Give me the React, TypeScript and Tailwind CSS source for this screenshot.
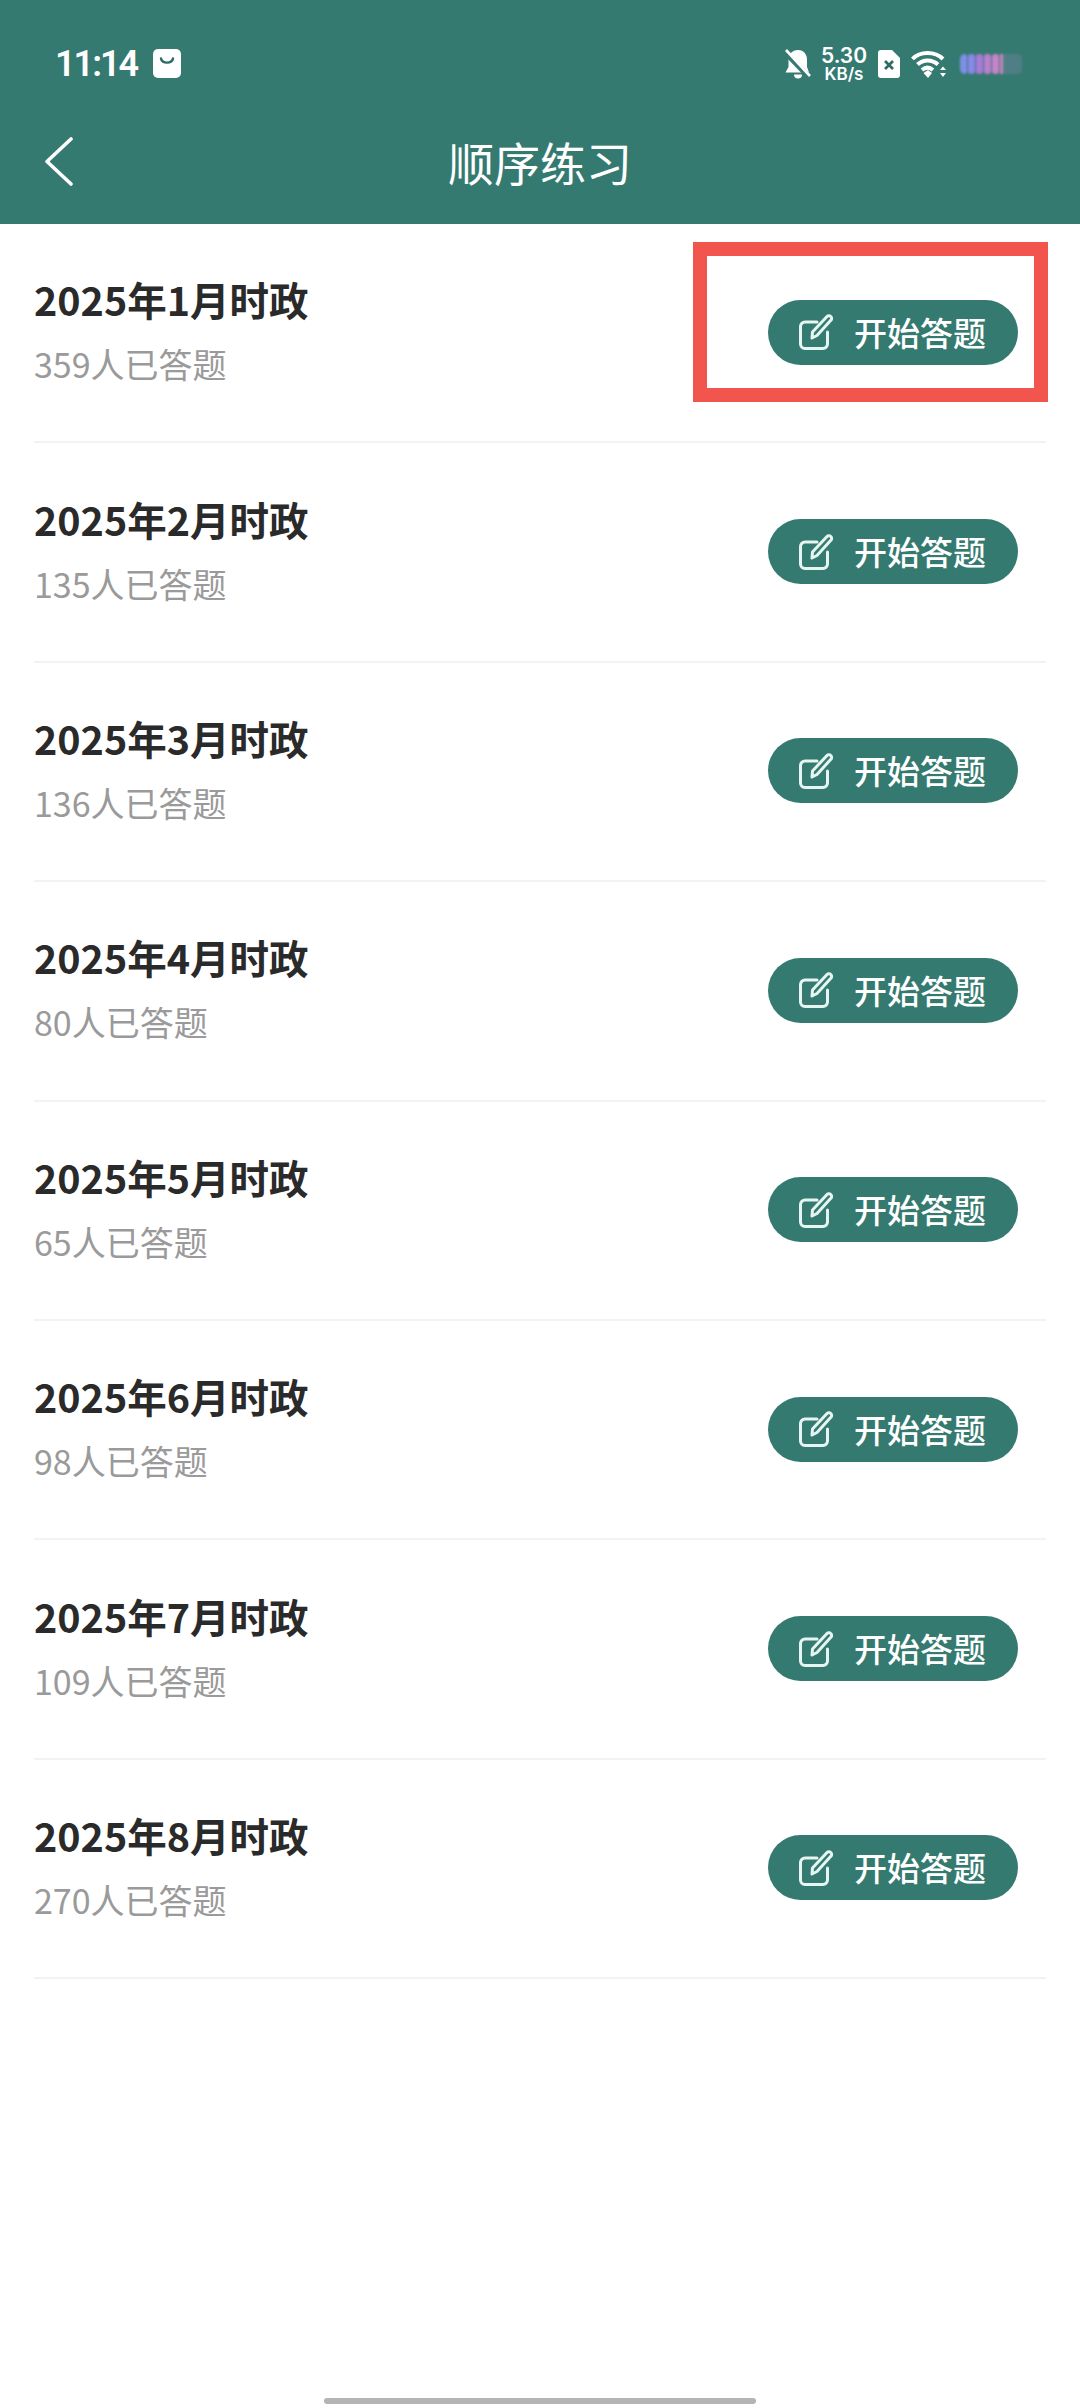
const CJK = '"Noto Sans CJK SC", "Noto Sans", sans-serif';

const rows = [
  { t: "2025年1月时政", s: "359人已答题" },
  { t: "2025年2月时政", s: "135人已答题" },
  { t: "2025年3月时政", s: "136人已答题" },
  { t: "2025年4月时政", s: "80人已答题" },
  { t: "2025年5月时政", s: "65人已答题" },
  { t: "2025年6月时政", s: "98人已答题" },
  { t: "2025年7月时政", s: "109人已答题" },
  { t: "2025年8月时政", s: "270人已答题" },
];

function EditIcon() {
  return (
    <svg width="36" height="38" viewBox="0 0 36 38" fill="none" stroke="#e6f5f1" strokeWidth="3" strokeLinecap="round" strokeLinejoin="round">
      <path d="M19 9 H7 a4.5 4.5 0 0 0 -4.5 4.5 V31 a4.5 4.5 0 0 0 4.5 4.5 H25 a4.5 4.5 0 0 0 4.5 -4.5 V19" />
      <path d="M14 25 L14.5 19 L29 3.5 a2.6 2.6 0 0 1 3.8 0 a2.6 2.6 0 0 1 0 3.8 L19 22.5 Z" />
    </svg>
  );
}

function StatusRight() {
  return (
    <div className="flex items-center">
      <svg width="26" height="30" viewBox="0 0 26 30" className="mr-[10px]">
        <path d="M13 1 C7 1 3.5 5.5 3.5 11 V18 L0.5 23.5 H24 L22 18 V11 C22 5.5 19 1 13 1 Z" fill="#fff" />
        <path d="M9 25.5 H17 A4 4 0 0 1 9 25.5 Z" fill="#fff" />
        <path d="M0 3 L25 29" stroke="#357a70" strokeWidth="5.5" />
        <path d="M1 1 L25 27" stroke="#fff" strokeWidth="2.6" />
      </svg>
      <div className="flex flex-col items-center w-[46px] text-white font-semibold leading-none mr-[10px]" style={{ fontFamily: "Inter, sans-serif" }}>
        <span className="text-[21px] leading-[21px]">5.30</span>
        <span className="text-[17px] leading-[17px]">KB/s</span>
      </div>
      <svg width="24" height="30" viewBox="0 0 24 30" className="mr-[10px]">
        <path d="M4 1 H15 L23 9 V26 a3 3 0 0 1 -3 3 H4 a3 3 0 0 1 -3 -3 V4 a3 3 0 0 1 3 -3 Z" fill="#fff" />
        <path d="M8 12 L16 20 M16 12 L8 20" stroke="#2c6b62" strokeWidth="2.6" />
      </svg>
      <svg width="36" height="28" viewBox="0 0 36 28" className="mr-[13px]">
        <g fill="none" stroke="#fff" strokeWidth="4">
          <path d="M1.5 9 C9 1 24 1 32 9" />
          <path d="M6.5 14.5 C12 9 21 9 27 14.5" />
          <path d="M11 20 C14.5 17 18.5 17 22 20" />
        </g>
        <path d="M12.5 23 L17 20 L21 23 L17 28 Z" fill="#fff" />
        <path d="M29 20 L32 16.5 L35 20 Z M29 23 L35 23 L32 27 Z" fill="#fff" />
      </svg>
      <div className="flex items-stretch h-[20px] w-[62px] blur-[1px] rounded-[5px] overflow-hidden">
        <div className="w-[7px] mr-[1px] rounded-[3px] bg-[#7f8fe8]" />
        <div className="w-[7px] mr-[1px] rounded-[3px] bg-[#8c86ea]" />
        <div className="w-[7px] mr-[1px] rounded-[3px] bg-[#a77bd8]" />
        <div className="w-[7px] mr-[1px] rounded-[3px] bg-[#bb7fd0]" />
        <div className="w-[7px] mr-[1px] rounded-[3px] bg-[#c883c8]" />
        <div className="w-[3px] bg-[#c884bc]" />
        <div className="flex-1 bg-[#4f7f86]" />
      </div>
    </div>
  );
}

function Row({ t, s }: { t: string; s: string }) {
  return (
    <div className="h-[219.4px] pl-[34px] pr-[34px]">
      <div className="h-full border-b-2 border-[#f3f3f3] flex items-center justify-between pr-[28px]">
        <div className="flex flex-col -mt-[7px]">
          <div className="text-[39.5px] leading-[60px] font-semibold text-[#2a2a2a]" style={{ fontFamily: CJK }}>{t}</div>
          <div className="text-[34px] leading-[50px] mt-[10px] text-[#9a9a9a]" style={{ fontFamily: CJK }}>{s}</div>
        </div>
        <div className="h-[65px] w-[250px] mt-[-1px] rounded-full bg-[#357a70] flex items-center pl-[30px]">
          <EditIcon />
          <span className="ml-[20px] text-[33px] font-[550] text-white leading-none" style={{ fontFamily: CJK }}>开始答题</span>
        </div>
      </div>
    </div>
  );
}

export default function App() {
  return (
    <div className="relative w-[1080px] h-[2408px] bg-white overflow-hidden" style={{ fontFamily: CJK }}>
      <div className="h-[224px] bg-[#357a70] pl-[44px] pr-[58px] flex flex-col">
        <div className="h-[126px] flex items-center justify-between pt-[1px]">
          <div className="flex items-center ml-[11px]">
            <span className="text-[36px] font-semibold text-white leading-none tracking-[-2px]" style={{ fontFamily: "Roboto, sans-serif" }}>11:14</span>
            <svg width="28" height="29" viewBox="0 0 28 29" className="ml-[16px]">
              <rect width="28" height="29" rx="5" fill="#fff" />
              <path d="M8 9.5 C9 15 19 15 20 9.5" fill="none" stroke="#2c6b62" strokeWidth="2.4" strokeLinecap="round" />
            </svg>
          </div>
          <StatusRight />
        </div>
        <div className="relative h-[74px] flex items-center justify-center">
          <svg width="30" height="50" viewBox="0 0 30 50" className="absolute left-0 top-[11px]" fill="none" stroke="#fff" strokeWidth="3.6" strokeLinecap="round" strokeLinejoin="round">
            <path d="M27 2 L3 24.5 L27 47" />
          </svg>
          <span className="text-[46px] text-white leading-none font-normal mb-[5px] ml-[14px]" style={{ fontFamily: CJK }}>顺序练习</span>
        </div>
      </div>
      {rows.map((r) => (
        <Row key={r.t} t={r.t} s={r.s} />
      ))}
      <div className="absolute left-[693px] top-[242px] w-[355px] h-[160px] border-[14px] border-[#f2544e]" />
      <div className="absolute left-[324px] top-[2398px] w-[432px] h-[6px] rounded-full bg-[#b4b4b4]" />
    </div>
  );
}
